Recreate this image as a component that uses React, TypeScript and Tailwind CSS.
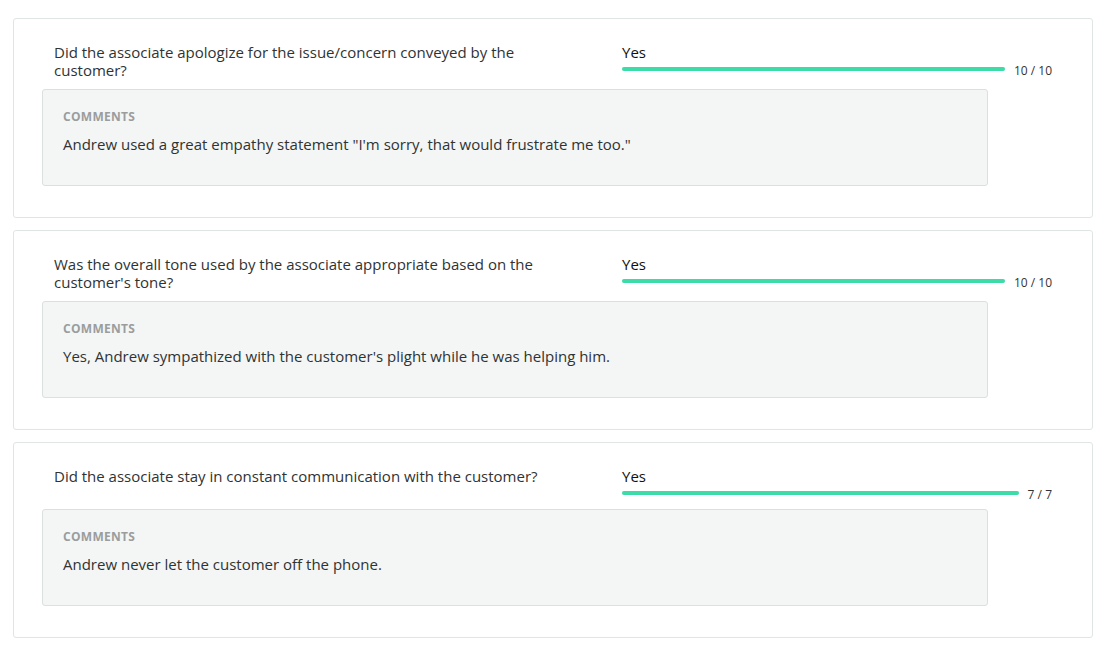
import React from "react";

type Item = {
  question: string;
  answer: string;
  score: number;
  max: number;
  comment: string;
};

const items: Item[] = [
  {
    question:
      "Did the associate apologize for the issue/concern conveyed by the customer?",
    answer: "Yes",
    score: 10,
    max: 10,
    comment:
      'Andrew used a great empathy statement "I\'m sorry, that would frustrate me too."',
  },
  {
    question:
      "Was the overall tone used by the associate appropriate based on the customer's tone?",
    answer: "Yes",
    score: 10,
    max: 10,
    comment:
      "Yes, Andrew sympathized with the customer's plight while he was helping him.",
  },
  {
    question:
      "Did the associate stay in constant communication with the customer?",
    answer: "Yes",
    score: 7,
    max: 7,
    comment: "Andrew never let the customer off the phone.",
  },
];

function QuestionCard({ item }: { item: Item }) {
  return (
    <div className="bg-white border border-[#dfe5e4] rounded-[3px] pt-[24px] pb-[31px] px-[28px]">
      <div className="flex items-start pl-[12px] pr-[12px]">
        <div className="w-[568px] shrink-0 pr-[68px] text-[15px] leading-[18px] text-[#2f3333]">
          {item.question}
        </div>
        <div className="flex-1 flex flex-col">
          <div className="text-[15px] leading-[18px] text-[#111]">
            {item.answer}
          </div>
          <div className="flex items-start gap-[9px] h-[14px]">
            <div className="flex-1 h-[4px] mt-[6px] rounded-full bg-[#e8eeec]">
              <div
                className="h-full rounded-full bg-[#3ddba8]"
                style={{ width: `${(item.score / item.max) * 100}%` }}
              />
            </div>
            <span className="text-[12px] leading-[16px] text-[#333] mt-[2px]">
              {item.score} / {item.max}
            </span>
          </div>
        </div>
      </div>
      <div className="mt-[10px] mr-[76px] bg-[#f3f6f5] border border-[#d9e0df] rounded-[3px] pt-[19px] pb-[31px] px-[20px]">
        <div className="text-[12px] leading-[16px] font-bold text-[#9b9d9d] tracking-[0.3px]">
          COMMENTS
        </div>
        <div className="mt-[9px] text-[15px] leading-[20px] text-[#2f3333]">
          {item.comment}
        </div>
      </div>
    </div>
  );
}

export default function App() {
  return (
    <div
      className="min-h-screen bg-white pt-[18px] pl-[13px] pr-[18px] flex flex-col gap-[12px]"
      style={{ fontFamily: "'Open Sans', 'Noto Sans', sans-serif" }}
    >
      {items.map((item, i) => (
        <QuestionCard key={i} item={item} />
      ))}
    </div>
  );
}
